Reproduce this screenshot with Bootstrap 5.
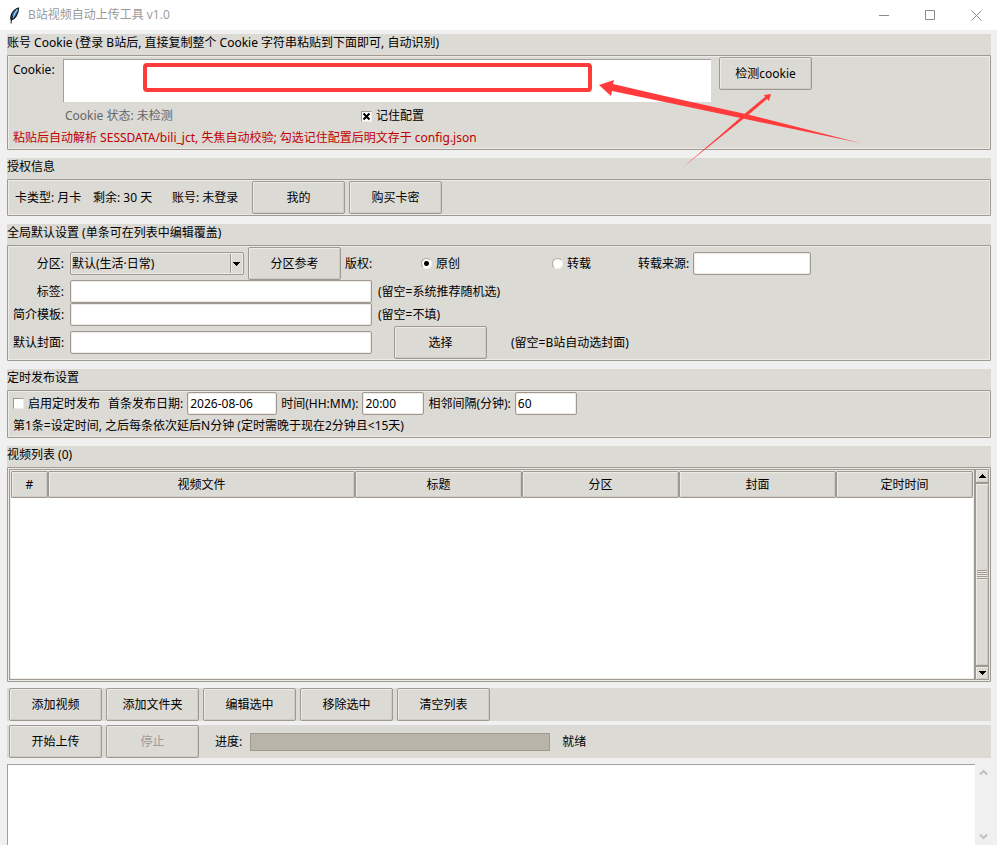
<!DOCTYPE html>
<html lang="zh-CN">
<head>
<meta charset="utf-8">
<meta name="viewport" content="width=device-width, initial-scale=1">
<title>B站视频自动上传工具 v1.0</title>
<link href="https://cdn.jsdelivr.net/npm/bootstrap@5.3.0/dist/css/bootstrap.min.css" rel="stylesheet">
<style>
:root{--face:#dcdad5;--edge:#9e9a91;--lite:#eeebe7;--shade:#cfcbc4}
body{font-family:"Noto Sans","Noto Sans CJK SC",sans-serif;font-size:12px;line-height:16px;color:#000;background:#f0f0f0}
.title-bar{height:30px;color:#999;padding-left:8px;font-family:"Open Sans","Noto Sans CJK SC",sans-serif}
.win-ctl{width:46px;height:30px;border:0;background:none;padding:0 15px 0 0;text-align:right;color:#8a8a8a}
.app-main{padding:4px 6px 0 7px;min-height:0}
.group{background:var(--face);margin:0 0 8px;min-width:0}
.group-title{font-size:12px;font-weight:400;line-height:16px;height:21px;padding-top:1px;margin:0}
.group-box{border:1px solid var(--edge);border-radius:1px;box-shadow:inset 0 0 0 1px var(--lite);padding:1px 2px 1px 5px}
.group-box.cookie-box{padding-top:3px;padding-bottom:3px}
.group-box.timed-box{padding-bottom:3px}
.btn.tk-btn{min-width:93px;height:33px;padding:0 8px;font-size:12px;line-height:16px;border:1px solid var(--edge);border-radius:2px;background:var(--face);color:#000;box-shadow:inset 1px 1px 0 var(--lite),inset -1px -1px 0 var(--shade)}
.btn.tk-btn:disabled{color:#999;opacity:1}
.btn.check-btn{margin-top:-2px}
.tk-in{height:23px;border:1px solid var(--edge);border-radius:2px;box-shadow:inset 0 0 0 1px var(--lite);background:#fff;padding:0 2px;font-size:12px;line-height:16px;color:#000;min-width:0}
.w-long{width:302px;margin-right:6px}.w-src{width:118px}.w-date{width:90px}.w-short{width:62px}
.tk-select{width:174px;appearance:none;background:var(--face) url("data:image/svg+xml,%3Csvg xmlns='http://www.w3.org/2000/svg' width='13' height='21'%3E%3Cpath d='M0 0h1v21H0z' fill='%239e9a91'/%3E%3Cpath d='M1 1h1v19H1z' fill='%23eeebe7'/%3E%3Cpath d='M3 9h7v1H9v1H8v1H7v1H6v-1H5v-1H4v-1H3z'/%3E%3C/svg%3E") no-repeat right center;padding:0 16px 0 1px}
.cookie-in{flex:0 1 648px;height:43px;border:0;border-top:1px solid #a0a0a0;border-left:1px solid #a0a0a0;resize:none;background:#fff}
.lead-label{width:51px;flex:none;text-align:right;white-space:nowrap;margin-right:6px}
.cookie-label{width:50px;flex:none;padding-top:3px}
.row-next{margin-top:6px}
.row-hint{margin-top:3px}
.status-text{width:296px;color:#666}
.warn-text{color:#c00000}
.lic-type{width:78px;margin-left:2px}.lic-left{width:79px}.lic-user{width:80px}
.cover-btn-gap{margin-left:16px}
.tk-check,.tk-radio{appearance:none;width:11px;height:11px;margin:0;flex:none;background:#fff}
.tk-check{border:1px solid #9e9a91;border-right-color:#eeebe7;border-bottom-color:#eeebe7}
.tk-check:checked{background:#fff url("data:image/svg+xml,%3Csvg xmlns='http://www.w3.org/2000/svg' width='9' height='9'%3E%3Cpath d='M1.500 1.500l6 6M7.500 1.500l-6 6' stroke='%23000' stroke-width='2'/%3E%3C/svg%3E") no-repeat center}
.tk-radio{border-radius:50%;border:1px solid #aaa69e;border-right-color:#f4f2ef;border-bottom-color:#f4f2ef}
.tk-radio:checked{background:radial-gradient(circle,#000 0 2px,#fff 3px)}
.copy-label{width:76px}.copy-own{width:131px}.copy-re{width:86px}
.group-box.list-box{padding:1px}
.list-group-last{margin-bottom:6px}
.tree{height:211px;border:1px solid var(--edge);box-shadow:inset 0 0 0 1px var(--lite);background:#fff;padding:1px;min-width:0}
.tree-table{width:100%;table-layout:fixed;border-collapse:separate;border-spacing:0}
.tree-table th{height:27px;padding:0;font-weight:400;text-align:center;background:var(--face);border:1px solid var(--edge);border-radius:1px;box-shadow:inset 1px 1px 0 var(--lite),inset -1px -1px 0 var(--shade)}
.c-no{width:37px}.c-file{width:307px}.c-title{width:167px}.c-mid{width:157px}
.tree-scroll{width:14px;flex:none;background:#b8b4a9}
.scroll-btn,.scroll-thumb{border:1px solid var(--edge);background:var(--face);box-shadow:inset 1px 1px 0 var(--lite),inset -1px -1px 0 var(--shade);padding:0}
.scroll-btn{height:14px;line-height:0}
.bar-row{background:var(--face);padding:0 2px;margin-bottom:4px}
.bar-last{margin-bottom:6px}
.upload-progress{width:300px;height:18px;border:1px solid var(--edge);border-radius:0;background:#b8b4a9}
.log-in{border:0;border-top:1px solid #a0a0a0;border-left:1px solid #a0a0a0;resize:none;background:#fff;min-width:0;overflow:hidden}
.log-scroll{width:16px;flex:none}
.log-scroll button{height:17px;border:0;background:none;padding:0;line-height:0}
.mark-box{position:absolute;left:143px;top:63px;width:449px;height:29px;border:4px solid #ff3b3b;border-radius:4px;pointer-events:none}
.mark-arrows{position:absolute;left:590px;top:70px;pointer-events:none}
</style>
<script src="https://cdn.jsdelivr.net/npm/bootstrap@5.3.0/dist/js/bootstrap.bundle.min.js"></script>
</head>
<body class="vh-100 overflow-hidden d-flex flex-column position-relative">
<header class="title-bar bg-white d-flex align-items-center flex-shrink-0">
  <svg width="12" height="17" viewBox="0 0 12 17" aria-hidden="true"><path d="M10.500 1C7.500 1.500 4 5 3 9c-.4 1.800-.3 3 .2 4C7 12 10.500 7 10.500 1z" fill="#2f6fb0" stroke="#10161d" stroke-width="1.200"/><path d="M9.500 2.500C8 4.500 6 7.500 4.800 10.500" stroke="#b9def5" stroke-width="1.200" fill="none"/><path d="M5 8.500C3.800 11 3.300 13.500 3 16.500" stroke="#111" fill="none"/></svg>
  <span class="ms-2 flex-fill">B站视频自动上传工具 v1.0</span>
  <button class="win-ctl" aria-label="最小化"><svg width="11" height="11"><path d="M0 5.500h10" stroke="currentColor"/></svg></button>
  <button class="win-ctl" aria-label="最大化"><svg width="11" height="11"><path d="M.5.500h9v9h-9z" fill="none" stroke="currentColor"/></svg></button>
  <button class="win-ctl" aria-label="关闭"><svg width="11" height="11"><path d="M.5.500l10 10M10.500.500l-10 10" stroke="currentColor"/></svg></button>
</header>

<main class="app-main d-flex flex-column flex-fill">
  <section class="group">
    <h2 class="group-title">账号 Cookie (登录 B站后, 直接复制整个 Cookie 字符串粘贴到下面即可, 自动识别)</h2>
    <div class="group-box cookie-box">
      <div class="d-flex align-items-start">
        <label class="cookie-label" for="cookie">Cookie:</label>
        <textarea class="cookie-in me-2" id="cookie"></textarea>
        <button class="btn tk-btn check-btn">检测cookie</button>
      </div>
      <div class="row-next d-flex align-items-center ps-5">
        <span class="status-text ms-1">Cookie 状态: 未检测</span>
        <input class="tk-check" type="checkbox" id="remember" checked><label class="ms-1" for="remember">记住配置</label>
      </div>
      <div class="row-next warn-text">粘贴后自动解析 SESSDATA/bili_jct, 失焦自动校验; 勾选记住配置后明文存于 config.json</div>
    </div>
  </section>

  <section class="group">
    <h2 class="group-title">授权信息</h2>
    <div class="group-box d-flex align-items-center">
      <span class="lic-type">卡类型: 月卡</span><span class="lic-left">剩余: 30 天</span><span class="lic-user">账号: 未登录</span>
      <button class="btn tk-btn me-1">我的</button>
      <button class="btn tk-btn">购买卡密</button>
    </div>
  </section>

  <section class="group">
    <h2 class="group-title">全局默认设置 (单条可在列表中编辑覆盖)</h2>
    <div class="group-box">
      <div class="d-flex align-items-center">
        <label class="lead-label" for="zone">分区:</label>
        <select class="tk-in tk-select me-1" id="zone"><option>默认(生活·日常)</option></select>
        <button class="btn tk-btn me-1">分区参考</button>
        <span class="copy-label">版权:</span>
        <span class="copy-own d-flex align-items-center"><input class="tk-radio" type="radio" name="copy" id="own" checked><label class="ms-1" for="own">原创</label></span>
        <span class="copy-re d-flex align-items-center"><input class="tk-radio" type="radio" name="copy" id="re"><label class="ms-1" for="re">转载</label></span>
        <label for="src">转载来源:</label><input class="tk-in w-src ms-1" id="src" type="text">
      </div>
      <div class="d-flex align-items-center">
        <label class="lead-label" for="tags">标签:</label><input class="tk-in w-long" id="tags" type="text"><span>(留空=系统推荐随机选)</span>
      </div>
      <div class="d-flex align-items-center">
        <label class="lead-label" for="desc">简介模板:</label><input class="tk-in w-long" id="desc" type="text"><span>(留空=不填)</span>
      </div>
      <div class="d-flex align-items-center">
        <label class="lead-label" for="cover">默认封面:</label><input class="tk-in w-long" id="cover" type="text"><button class="btn tk-btn cover-btn-gap me-4">选择</button><span>(留空=B站自动选封面)</span>
      </div>
    </div>
  </section>

  <section class="group">
    <h2 class="group-title">定时发布设置</h2>
    <div class="group-box timed-box">
      <div class="d-flex align-items-center gap-1">
        <input class="tk-check" type="checkbox" id="timed"><label class="me-1" for="timed">启用定时发布</label>
        <label for="date">首条发布日期:</label><input class="tk-in w-date" id="date" type="text" value="2026-08-06">
        <label for="time">时间(HH:MM):</label><input class="tk-in w-short" id="time" type="text" value="20:00">
        <label for="gap">相邻间隔(分钟):</label><input class="tk-in w-short" id="gap" type="text" value="60">
      </div>
      <div class="row-hint">第1条=设定时间, 之后每条依次延后N分钟 (定时需晚于现在2分钟且&lt;15天)</div>
    </div>
  </section>

  <section class="group list-group-last">
    <h2 class="group-title">视频列表 (0)</h2>
    <div class="group-box list-box d-flex">
      <div class="tree flex-fill">
        <table class="tree-table">
          <thead><tr><th class="c-no">#</th><th class="c-file">视频文件</th><th class="c-title">标题</th><th class="c-mid">分区</th><th class="c-mid">封面</th><th>定时时间</th></tr></thead>
        </table>
      </div>
      <div class="tree-scroll d-flex flex-column">
        <button class="scroll-btn" aria-label="向上滚动"><svg width="7" height="4" shape-rendering="crispEdges"><path d="M3 0h1v1h1v1h1v1h1v1H0V3h1V2h1V1h1z"/></svg></button>
        <div class="scroll-thumb flex-fill d-flex align-items-center justify-content-center"><svg width="10" height="10" shape-rendering="crispEdges"><path d="M0 .5h10M0 2.500h10M0 4.500h10M0 6.500h10M0 8.500h10" stroke="#9e9a91"/><path d="M0 1.500h10M0 3.500h10M0 5.500h10M0 7.500h10M0 9.500h10" stroke="#eeebe7"/></svg></div>
        <button class="scroll-btn" aria-label="向下滚动"><svg width="7" height="4" shape-rendering="crispEdges"><path d="M0 0h7v1H6v1H5v1H4v1H3V3H2V2H1V1H0z"/></svg></button>
      </div>
    </div>
  </section>

  <div class="bar-row d-flex gap-1">
    <button class="btn tk-btn">添加视频</button>
    <button class="btn tk-btn">添加文件夹</button>
    <button class="btn tk-btn">编辑选中</button>
    <button class="btn tk-btn">移除选中</button>
    <button class="btn tk-btn">清空列表</button>
  </div>
  <div class="bar-row bar-last d-flex align-items-center gap-1">
    <button class="btn tk-btn">开始上传</button>
    <button class="btn tk-btn" disabled>停止</button>
    <span class="ms-2 ps-1 pe-1">进度:</span>
    <div class="progress upload-progress" role="progressbar" aria-label="进度" aria-valuenow="0" aria-valuemin="0" aria-valuemax="100"><div class="progress-bar" style="width:0%"></div></div>
    <span class="ms-2">就绪</span>
  </div>

  <div class="d-flex flex-fill">
    <textarea class="log-in flex-fill" aria-label="日志" readonly></textarea>
    <div class="log-scroll d-flex flex-column justify-content-between">
      <button aria-label="日志向上"><svg width="9" height="7"><path d="M1 5.500l3.500-3.500L8 5.500" fill="none" stroke="#bfbfbf" stroke-width="2"/></svg></button>
      <button aria-label="日志向下"><svg width="9" height="7"><path d="M1 1.500L4.500 5 8 1.500" fill="none" stroke="#bfbfbf" stroke-width="2"/></svg></button>
    </div>
  </div>
</main>

<div class="mark-box"></div>
<svg class="mark-arrows" width="280" height="104" viewBox="590 70 280 104" aria-hidden="true"><g fill="#ff3b3b"><path d="M599 85l15-5-1 4 47 11 90 20 110 28-110-23-90-19-48-10-1 5z"/><path d="M771 94l-2 7-2-2-20 17-27 21.500L682 168l36-30.800 27-23.700 20-16.500-1-2z"/></g></svg>
</body>
</html>
